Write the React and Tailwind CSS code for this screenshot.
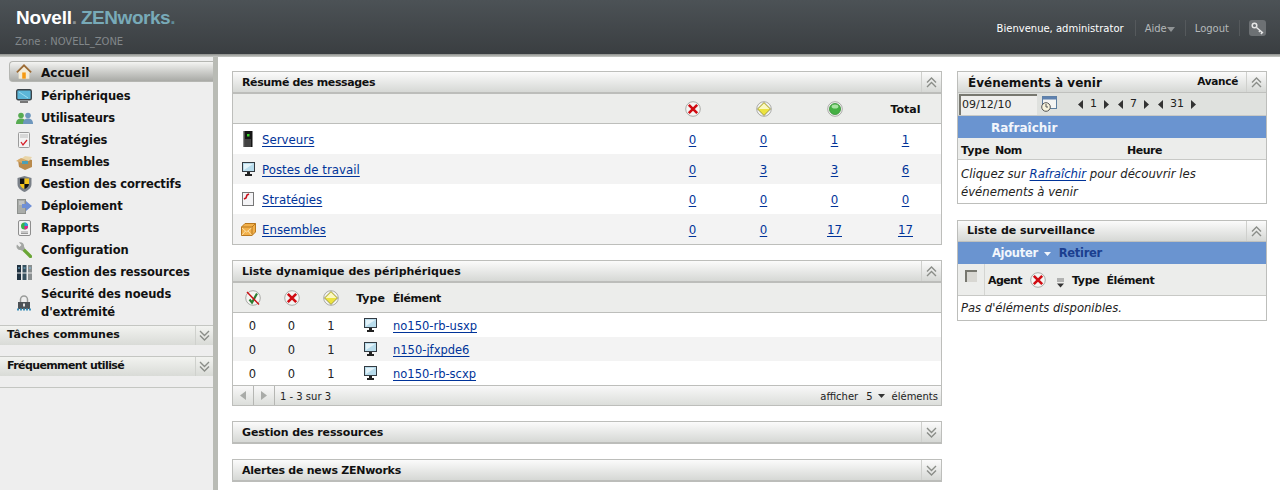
import React from "react";

const font = "font-['DejaVu_Sans',Verdana,sans-serif]";

function Chevrons({ up = false }) {
  return (
    <svg width="11" height="11" viewBox="0 0 11 11" fill="none" stroke="#8a8d88" strokeWidth="1.4">
      {up ? (
        <>
          <path d="M1 5.5 5.5 1 10 5.5" />
          <path d="M1 10 5.5 5.5 10 10" />
        </>
      ) : (
        <>
          <path d="M1 1 5.5 5.5 10 1" />
          <path d="M1 5.5 5.5 10 10 5.5" />
        </>
      )}
    </svg>
  );
}

function Ring({ children }) {
  return (
    <svg width="16" height="16" viewBox="0 0 16 16" className="block">
      <circle cx="8" cy="8" r="7.3" fill="#f5f5f3" stroke="#a9aaa6" />
      {children}
    </svg>
  );
}

const ErrorIcon = () => (
  <Ring>
    <path d="M3.800 3.800 12.200 12.200M12.200 3.800 3.800 12.200" stroke="#d00c12" strokeWidth="2.600" />
  </Ring>
);
const WarnIcon = () => (
  <Ring>
    <path d="M8 1.500 14.500 8 8 14.500 1.500 8Z" fill="#ece33f" stroke="#77752f" strokeWidth="0.700" />
    <path d="M8 2.500 13.500 8H2.500Z" fill="#faf8c4" />
  </Ring>
);
const OkIcon = () => (
  <Ring>
    <circle cx="8" cy="8" r="5.600" fill="#45b043" stroke="#2f8a30" strokeWidth="0.700" />
    <ellipse cx="8" cy="5.500" rx="3.400" ry="2" fill="#a8e3a2" />
  </Ring>
);
const NoAgentIcon = () => (
  <Ring>
    <path d="M4.500 9.500 7 12.500 12 3.500" stroke="#2e7d32" strokeWidth="2.200" fill="none" />
    <path d="M2 2 14 14.500" stroke="#cc0f14" strokeWidth="1.400" />
  </Ring>
);

function MonitorIcon() {
  return (
    <svg width="13" height="14" viewBox="0 0 13 14" className="block">
      <rect x="0.5" y="0.5" width="12" height="9" fill="#b8dcec" stroke="#333b42" />
      <path d="M2 8V2h9z" fill="#e4f3f9" />
      <rect x="5" y="10" width="3" height="2" fill="#222" />
      <rect x="3" y="12" width="7" height="2" fill="#222" />
    </svg>
  );
}

function ServerIcon() {
  return (
    <svg width="10" height="16" viewBox="0 0 10 16" className="block">
      <rect x="0.5" y="0" width="9" height="16" fill="#151515" />
      <rect x="0" y="0" width="1.5" height="16" fill="#8a8a8a" />
      <rect x="4" y="3" width="2.5" height="2.5" fill="#36d02a" />
      <path d="M3 8v8M5 8v8M7 8v8" stroke="#888" strokeWidth="0.8" />
    </svg>
  );
}

function PolicyIcon() {
  return (
    <svg width="12" height="14" viewBox="0 0 12 14" className="block">
      <rect x="0.5" y="0.5" width="11" height="13" fill="#f4f4f6" stroke="#777" />
      <path d="M2 7 4 6 5 3 7 2" stroke="#c8101a" strokeWidth="1.6" fill="none" />
    </svg>
  );
}

function BundleIcon() {
  return (
    <svg width="15" height="13" viewBox="0 0 15 13" className="block">
      <path d="M4 0.5H14.5V9L11 12.5H0.5V4Z" fill="#f2b04a" stroke="#b9781f" />
      <path d="M0.5 4H11V12.5M11 4 14.5 0.5" fill="none" stroke="#b9781f" />
      <path d="M1 5 5.5 9 10.5 5M1 12 4.5 8M10.5 12 7 8" stroke="#fbe0a6" fill="none" />
    </svg>
  );
}

const navIcons = {
  home: (
    <svg width="16" height="16" viewBox="0 0 18 17" className="block">
      <path d="M9 1 1 9h2v7h12V9h2z" fill="#f4ecd8" />
      <path d="M1 9 9 1l8 8" fill="none" stroke="#9c6b35" strokeWidth="2" />
      <rect x="7" y="9" width="4" height="7" fill="#f59a13" />
    </svg>
  ),
  monitor: (
    <svg width="16" height="15" viewBox="0 0 16 15">
      <rect x="0.7" y="0.7" width="14.6" height="10" rx="1.5" fill="#5cb6d8" stroke="#3c444a" strokeWidth="1.4" />
      <path d="M3 3l9 6" stroke="#9ddcf0" />
      <rect x="4" y="12" width="8" height="2" fill="#777" />
    </svg>
  ),
  users: (
    <svg width="17" height="12" viewBox="0 0 17 12">
      <circle cx="5" cy="3.5" r="2.8" fill="#57ab52" />
      <path d="M0 12c0-4 2-5.5 5-5.5s5 1.500 5 5.500z" fill="#57ab52" />
      <circle cx="12" cy="3.5" r="2.8" fill="#6e97bd" />
      <path d="M7 12c0-4 2-5.500 5-5.500s5 1.500 5 5.500z" fill="#6e97bd" />
    </svg>
  ),
  policy: (
    <svg width="12" height="16" viewBox="0 0 12 16">
      <rect x="0.5" y="0.5" width="11" height="15" rx="1" fill="#f3f3f3" stroke="#9b9b9b" />
      <path d="M2 3h8M2 5h8" stroke="#bbb" />
      <path d="M3 10l2 3 4-5" stroke="#d5202a" strokeWidth="1.3" fill="none" />
    </svg>
  ),
  bundle: (
    <svg width="17" height="15" viewBox="0 0 17 15">
      <path d="M2 5 9 3l7 2v7l-7 3-6-3z" fill="#b98a4c" />
      <path d="M5 4 9 1l7 1-3 4z" fill="#e9d5a8" />
      <path d="M0 6l5-3 5 2-4 3z" fill="#d7ab6a" />
      <rect x="6" y="6" width="6" height="3" fill="#4aa0b8" />
    </svg>
  ),
  shield: (
    <svg width="15" height="16" viewBox="0 0 15 16">
      <path d="M7.500 0 14.500 2V8C14.500 12 11 14.500 7.500 16 4 14.500 .5 12 .5 8V2Z" fill="#7a8088" />
      <path d="M7.500 2.500H3V8H7.500Z" fill="#111" />
      <path d="M7.500 2.500H12V8H7.500Z" fill="#f5c518" />
      <path d="M3 8H7.500V13C5 12 3.300 10.500 3 8Z" fill="#f5c518" />
      <path d="M12 8H7.500V13C10 12 11.700 10.500 12 8Z" fill="#111" />
    </svg>
  ),
  deploy: (
    <svg width="15" height="15" viewBox="0 0 15 15">
      <rect x="0.500" y="0.500" width="8" height="14" fill="#a9aca9" stroke="#8d908d" />
      <path d="M2 3h5M2 5h5" stroke="#dcdcdc" />
      <path d="M5 5h4V2l6 5-6 5V9H5z" fill="#6f8fd6" />
    </svg>
  ),
  report: (
    <svg width="13" height="16" viewBox="0 0 13 16">
      <rect x="0.500" y="0.500" width="12" height="15" rx="1.500" fill="#f2f2f2" stroke="#8e8e8e" />
      <circle cx="6.500" cy="6" r="3.500" fill="#38b24a" />
      <path d="M6.500 6V2.500A3.500 3.500 0 0 1 10 6z" fill="#2f9ed8" />
      <path d="M6.500 6H10A3.500 3.500 0 0 1 6.500 9.500z" fill="#e8208f" />
      <path d="M3 12h7M3 13.500h7" stroke="#999" />
    </svg>
  ),
  wrench: (
    <svg width="16" height="16" viewBox="0 0 16 16">
      <path d="M8 8 14.500 14.500" stroke="#6aa636" strokeWidth="3.200" strokeLinecap="round" />
      <path d="M1 2.500 3.500 5 5.500 3 3 .5C5.500 -.5 8.500 1.500 8 4.500L9 6.500 6.500 9 4.500 8C1.500 8.500 -.5 5 1 2.500Z" fill="#a3a6a3" />
    </svg>
  ),
  resources: (
    <svg width="15" height="15" viewBox="0 0 15 15">
      <rect x="0" y="0" width="4" height="15" fill="#1f3140" />
      <rect x="5.500" y="0" width="4" height="15" fill="#38515f" />
      <rect x="11" y="0" width="4" height="15" fill="#8a8f90" />
      <path d="M0 8h15" stroke="#e8e8e8" />
      <path d="M1 3h2M6.500 3h2M12 3h2" stroke="#7fc0e0" />
    </svg>
  ),
  lock: (
    <svg width="14" height="16" viewBox="0 0 14 16">
      <path d="M3.500 7V4.500a3.500 3.500 0 0 1 7 0V7" fill="none" stroke="#9a9c9a" strokeWidth="1.500" />
      <rect x="1" y="7" width="12" height="7" fill="#4d5257" />
      <rect x="6" y="8.500" width="2" height="3" fill="#e2e2e2" />
      <path d="M0 14.500h14" stroke="#3d8fb8" strokeWidth="2" strokeDasharray="2 1" />
    </svg>
  ),
};

const navItems = [
  { label: "Périphériques", icon: "monitor" },
  { label: "Utilisateurs", icon: "users" },
  { label: "Stratégies", icon: "policy" },
  { label: "Ensembles", icon: "bundle" },
  { label: "Gestion des correctifs", icon: "shield" },
  { label: "Déploiement", icon: "deploy" },
  { label: "Rapports", icon: "report" },
  { label: "Configuration", icon: "wrench" },
  { label: "Gestion des ressources", icon: "resources" },
];

function Header() {
  return (
    <header className="h-[54px] shrink-0 flex justify-between bg-gradient-to-b from-[#4c5256] to-[#3a3e41]">
      <div className="pl-[16px] pt-[8px]">
        <div className="font-['Liberation_Sans',Arial,sans-serif] font-bold text-[19px] leading-[20px] tracking-[-0.2px] text-white">
          Novell<span className="text-[#8a9094]">.</span>
          <span className="ml-[4px] tracking-[-0.45px] text-[#78aab8]">ZENworks<span className="text-[#5f8a96]">.</span></span>
        </div>
        <div className="mt-[7px] -ml-[1px] text-[10px] leading-[14px] text-[#82878a]">Zone : NOVELL_ZONE</div>
      </div>
      <div className="flex items-center pt-[2px] pr-[14px] text-[10px]">
        <span className="text-white">Bienvenue, administrator</span>
        <span className="ml-[11px] h-[16px] w-px bg-[#55595c]" />
        <span className="ml-[9px] text-[#b4b8ba] flex items-center">
          Aide
          <svg width="8" height="5" viewBox="0 0 8 5" className="mt-[2px]"><path d="M0 0h8L4 5z" fill="#8f9395" /></svg>
        </span>
        <span className="ml-[10px] h-[16px] w-px bg-[#55595c]" />
        <span className="ml-[9px] text-[#b4b8ba]">Logout</span>
        <span className="ml-[10px] h-[16px] w-px bg-[#55595c]" />
        <span className="ml-[9px] w-[17px] h-[16px] rounded-[3px] bg-[#6d7174] flex items-center justify-center">
          <svg width="13" height="13" viewBox="0 0 13 13" fill="none" stroke="#e6e6e6">
            <circle cx="3.500" cy="3.500" r="2.300" strokeWidth="1.500" />
            <path d="M5.500 5.500 12 11M9 8.500 8 10M11 10.500 10 12" strokeWidth="1.500" />
          </svg>
        </span>
      </div>
    </header>
  );
}

function SideSection({ title, tight = false }) {
  return (
    <div className="h-[20px] flex items-center justify-between border-t border-[#c4c6c2] bg-gradient-to-b from-[#f2f3f0] to-[#d9dbd7] pl-[7px] font-bold text-[11px] text-[#111]">
      <span className={tight ? "tracking-[-0.6px]" : ""}>{title}</span>
      <span className="w-[18px] h-full border-l border-[#cfd1cd] flex items-center justify-center">
        <Chevrons />
      </span>
    </div>
  );
}

function Sidebar() {
  return (
    <aside className="w-[213px] shrink-0 bg-[#eeeeee] pt-[4px] text-[#111]">
      <div className="ml-[9px] h-[21px] flex items-center rounded-l-[4px] border border-r-0 border-[#b5b6b2] bg-gradient-to-b from-[#f4f4f2] to-[#a9aaa6]">
        <span className="w-[31px] pl-[6px] shrink-0">{navIcons.home}</span>
        <span className="font-bold text-[12px] pt-[3px]">Accueil</span>
      </div>
      <nav className="pt-[3px]">
        {navItems.map((item) => (
          <div key={item.label} className="h-[22px] flex items-center">
            <span className="w-[41px] shrink-0 flex justify-center pl-[7px]">{navIcons[item.icon]}</span>
            <span className="pt-[2px] font-bold text-[11.5px] tracking-[-0.1px] whitespace-nowrap">{item.label}</span>
          </div>
        ))}
        <div className="mt-[2px] h-[36px] flex items-center">
          <span className="w-[41px] shrink-0 flex justify-center pl-[7px]">{navIcons.lock}</span>
          <span className="font-bold text-[11.5px] tracking-[-0.1px] leading-[18px]">
            Sécurité des noeuds
            <br />
            d'extrémité
          </span>
        </div>
      </nav>
      <div className="mt-[4px]">
        <SideSection title="Tâches communes" />
      </div>
      <div className="mt-[11px]">
        <SideSection title="Fréquemment utilisé" tight />
      </div>
      <div className="mt-[11px] border-t border-[#c4c6c2]" />
    </aside>
  );
}

function PanelHeader({ title, collapsed = false, extra, small = false, titleClass = "text-[11px]" }) {
  return (
    <div className={`flex items-center justify-between bg-gradient-to-b from-[#fbfbfb] to-[#d6d8d5] ${small ? "h-[21px] border-b border-[#c0c1be]" : "h-[22px] border-b-2 border-[#bcbdba]"}`}>
      <span className={`font-bold text-[#111] pl-[9px] ${small ? "pt-[1px]" : "pt-[3px]"} ${titleClass}`}>{title}</span>
      <div className="flex items-center h-full">
        {extra}
        <span className="w-[20px] h-full border-l border-[#cfd0cd] flex items-center justify-center">
          <Chevrons up={!collapsed} />
        </span>
      </div>
    </div>
  );
}

const summaryRows = [
  { name: "Serveurs", icon: <ServerIcon />, values: [0, 0, 1, 1] },
  { name: "Postes de travail", icon: <MonitorIcon />, values: [0, 3, 3, 6] },
  { name: "Stratégies", icon: <PolicyIcon />, values: [0, 0, 0, 0] },
  { name: "Ensembles", icon: <BundleIcon />, values: [0, 0, 17, 17] },
];

function Link({ children }) {
  return <a className="inline-block pt-[4px] text-[#003399] underline underline-offset-2">{children}</a>;
}

function SummaryPanel() {
  return (
    <section className="border border-[#bdbebb]">
      <PanelHeader title="Résumé des messages" titleClass="text-[11px] tracking-[-0.37px]" />
      <div className="h-[30px] grid grid-cols-[1fr_71px_71px_71px_71px] items-center bg-[#ecedeb] border-b border-[#bdbebb] font-bold text-[11px] text-[#111]">
        <span />
        <span className="flex justify-center"><ErrorIcon /></span>
        <span className="flex justify-center"><WarnIcon /></span>
        <span className="flex justify-center"><OkIcon /></span>
        <span className="text-center pt-[3px]">Total</span>
      </div>
      {summaryRows.map((row, i) => (
        <div key={row.name} className={`h-[30px] grid grid-cols-[1fr_71px_71px_71px_71px] items-center text-[11.8px] ${i % 2 ? "bg-[#f3f3f3]" : "bg-white"}`}>
          <div className="flex items-center">
            <span className="w-[29px] flex justify-center pl-[1px]">{row.icon}</span>
            <Link>{row.name}</Link>
          </div>
          {row.values.map((v, j) => (
            <span key={j} className="text-center"><Link>{v}</Link></span>
          ))}
        </div>
      ))}
    </section>
  );
}

const deviceRows = ["no150-rb-usxp", "n150-jfxpde6", "no150-rb-scxp"];

function DevicePanel() {
  const cols = "grid grid-cols-[39px_39px_40px_39px_1fr] items-center";
  return (
    <section className="mt-[15px] border border-[#bdbebb]">
      <PanelHeader title="Liste dynamique des périphériques" />
      <div className={`${cols} h-[30px] bg-[#ecedeb] border-b border-[#bdbebb] font-bold text-[11px] text-[#111]`}>
        <span className="flex justify-center"><NoAgentIcon /></span>
        <span className="flex justify-center"><ErrorIcon /></span>
        <span className="flex justify-center"><WarnIcon /></span>
        <span className="text-center pt-[3px]">Type</span>
        <span className="pl-[3px] pt-[3px] tracking-[-0.4px]">Élément</span>
      </div>
      {deviceRows.map((name, i) => (
        <div key={name} className={`${cols} h-[24px] text-[11.5px] ${i % 2 ? "bg-[#f3f3f3]" : "bg-white"}`}>
          <span className="text-center pt-[4px]">0</span>
          <span className="text-center pt-[4px]">0</span>
          <span className="text-center pt-[4px]">1</span>
          <span className="flex justify-center -mt-[1px]"><MonitorIcon /></span>
          <span className="pl-[3px]"><Link>{name}</Link></span>
        </div>
      ))}
      <div className="h-[20px] flex items-center border-t border-[#bdbebb] bg-gradient-to-b from-[#f8f8f8] to-[#dcdedb] text-[10px] text-[#222]">
        <span className="w-[21px] h-full flex items-center justify-center border-r border-[#b5b6b3]">
          <svg width="6" height="9" viewBox="0 0 6 9"><path d="M6 0v9L0 4.500z" fill="#a9aba8" /></svg>
        </span>
        <span className="w-[21px] h-full flex items-center justify-center border-r border-[#b5b6b3]">
          <svg width="6" height="9" viewBox="0 0 6 9"><path d="M0 0v9l6-4.500z" fill="#a9aba8" /></svg>
        </span>
        <span className="pl-[5px] pt-[1px]">1 - 3 sur 3</span>
        <span className="ml-auto pr-[3px] pt-[1px] flex items-center">
          afficher
          <span className="ml-[8px]">5</span>
          <svg width="7" height="4" viewBox="0 0 7 4" className="ml-[5px] mr-[7px]"><path d="M0 0h7L3.500 4z" fill="#333" /></svg>
          éléments
        </span>
      </div>
    </section>
  );
}

function Arrows({ value }) {
  return (
    <span className="flex items-center text-[11px] text-[#222]">
      <svg width="5" height="9" viewBox="0 0 5 9"><path d="M5 0v9L0 4.500z" fill="#333" /></svg>
      <span className="mx-[7px]">{value}</span>
      <svg width="5" height="9" viewBox="0 0 5 9"><path d="M0 0v9l5-4.500z" fill="#333" /></svg>
    </span>
  );
}

function EventsPanel() {
  return (
    <section className="border border-[#bdbebb]">
      <PanelHeader
        title="Événements à venir"
        titleClass="text-[12px] pl-[10px]"
        small
        extra={<span className="pr-[8px] font-bold text-[10.5px] tracking-[-0.3px] text-[#111]">Avancé</span>}
      />
      <div className="h-[23px] flex items-center bg-[#dfe1de] border-b border-[#c8c9c6]">
        <span className="ml-[1px] w-[78px] h-[21px] bg-[#eeeeec] border-l-2 border-t-2 border-[#77776f] text-[11px] leading-[18px] pl-[1px] text-[#222]">09/12/10</span>
        <svg width="16" height="16" viewBox="0 0 16 16" className="ml-[4px]">
          <rect x="1.500" y="0.500" width="14" height="12" fill="#f5f5f3" stroke="#5f7f9f" />
          <rect x="1.500" y="0.500" width="14" height="3" fill="#5f82b0" />
          <circle cx="5" cy="11" r="4.300" fill="#f7f3dc" stroke="#555" />
          <path d="M5 8v3h2" stroke="#555" fill="none" />
        </svg>
        <span className="ml-[21px] flex gap-[9px]">
          <Arrows value="1" />
          <Arrows value="7" />
          <Arrows value="31" />
        </span>
      </div>
      <div className="h-[22px] pt-[2px] flex items-center bg-[#6a94d0] pl-[33px] font-bold text-[12px] text-[#f2f6fc]">Rafraîchir</div>
      <div className="h-[22px] pt-[5px] flex items-center bg-[#ecedeb] border-b border-[#c8c9c6] font-bold text-[11px] text-[#111]">
        <span className="pl-[3px] w-[37px]">Type</span>
        <span className="w-[132px] tracking-[-0.5px]">Nom</span>
        <span className="tracking-[-0.5px]">Heure</span>
      </div>
      <p className="px-[3px] pt-[5px] pb-[2px] italic text-[11.7px] leading-[18px] text-[#222]">
        Cliquez sur <a className="text-[#003399] underline underline-offset-2">Rafraîchir</a> pour découvrir les événements à venir
      </p>
    </section>
  );
}

function WatchPanel() {
  return (
    <section className="mt-[16px] border border-[#bdbebb]">
      <PanelHeader title="Liste de surveillance" small />
      <div className="h-[22px] pt-[2px] flex items-center bg-[#6a94d0] pl-[34px] font-bold text-[11.5px] tracking-[-0.3px]">
        <span className="text-[#f2f6fc]">Ajouter</span>
        <svg width="7" height="4" viewBox="0 0 7 4" className="ml-[6px]"><path d="M0 0h7L3.500 4z" fill="#f2f6fc" /></svg>
        <span className="ml-[8px] text-[#1b3f8f]">Retirer</span>
      </div>
      <div className="h-[32px] flex items-center bg-[#ecedeb] border-b border-[#c8c9c6] font-bold text-[11px] text-[#111]">
        <span className="w-[27px] h-full border-r border-[#d4d5d2] pl-[7px] pt-[6px] shrink-0">
          <span className="block w-[12px] h-[12px] bg-[#d8d7d2] border-l-2 border-t-2 border-[#77776f]" />
        </span>
        <span className="ml-[3px] pt-[4px] tracking-[-0.6px]">Agent</span>
        <span className="ml-[8px]"><ErrorIcon /></span>
        <svg width="9" height="10" viewBox="0 0 9 10" className="ml-[10px] mt-[7px]">
          <path d="M1 1h7M1 3h7" stroke="#777" />
          <path d="M1 5.500h7L4.500 9.500z" fill="#333" />
        </svg>
        <span className="ml-[7px] pt-[4px] tracking-[-0.3px]">Type</span>
        <span className="ml-[7px] pt-[4px] tracking-[-0.4px]">Élément</span>
      </div>
      <p className="h-[24px] px-[3px] pt-[2px] flex items-center italic text-[11.6px] text-[#222]">Pas d'éléments disponibles.</p>
    </section>
  );
}

export default function App() {
  return (
    <div className={`${font} h-[490px] w-[1280px] overflow-hidden flex flex-col bg-white text-[12px] text-[#222]`}>
      <Header />
      <div className="h-[3px] shrink-0 bg-gradient-to-b from-[#8d8f8c] to-[#c9cbc7]" />
      <div className="flex flex-1 min-h-0">
        <Sidebar />
        <div className="w-[5px] shrink-0 bg-[#b9bbb5]" />
        <main className="flex-1 flex pl-[14px] pt-[14px]">
          <div className="w-[710px] shrink-0">
            <SummaryPanel />
            <DevicePanel />
            <section className="mt-[15px] border border-b-0 border-[#bdbebb]">
              <PanelHeader title="Gestion des ressources" titleClass="text-[11px] tracking-[-0.14px]" collapsed />
            </section>
            <section className="mt-[15px] border border-b-0 border-[#bdbebb]">
              <PanelHeader title="Alertes de news ZENworks" titleClass="text-[11px] tracking-[-0.25px]" collapsed />
            </section>
          </div>
          <div className="ml-[15px] w-[310px] shrink-0">
            <EventsPanel />
            <WatchPanel />
          </div>
        </main>
      </div>
    </div>
  );
}
